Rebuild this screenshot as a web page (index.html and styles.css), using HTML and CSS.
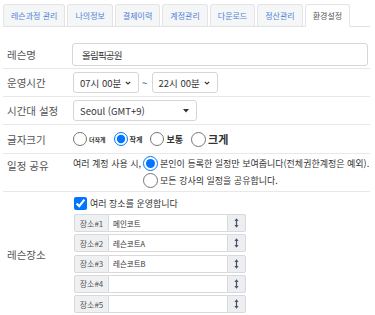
FILE: index.html
```html
<!DOCTYPE html>
<html lang="ko">
<head>
    <meta charset="UTF-8">
    <meta name="viewport" content="width=device-width, initial-scale=1.0">
    <title>환경설정</title>
    <link rel="stylesheet" href="styles.css">
</head>
<body>
    <div class="wrap">
        <ul class="tabs">
            <li>레슨과정 관리</li>
            <li>나의정보</li>
            <li>결제이력</li>
            <li>계정관리</li>
            <li>다운로드</li>
            <li>정산관리</li>
            <li class="active">환경설정</li>
        </ul>

        <div class="settings">
            <div class="row row-first">
                <div class="row-label">레슨명</div>
                <div class="row-body">
                    <input class="text-input" type="text" value="올림픽공원">
                </div>
            </div>

            <div class="row">
                <div class="row-label">운영시간</div>
                <div class="row-body time-range">
                    <div class="select time">
                        <span>07시 00분</span>
                        <svg width="6" height="4" viewBox="0 0 6 4"><polyline points="0.8,0.8 3,3 5.2,0.8" fill="none" stroke="#333" stroke-width="1.2"/></svg>
                    </div>
                    <span class="tilde">~</span>
                    <div class="select time">
                        <span>22시 00분</span>
                        <svg width="6" height="4" viewBox="0 0 6 4"><polyline points="0.8,0.8 3,3 5.2,0.8" fill="none" stroke="#333" stroke-width="1.2"/></svg>
                    </div>
                </div>
            </div>

            <div class="row">
                <div class="row-label">시간대 설정</div>
                <div class="row-body">
                    <div class="select zone">
                        <span>Seoul (GMT+9)</span>
                        <svg width="6" height="4" viewBox="0 0 6 4"><polygon points="0,0 6,0 3,3.5" fill="#333"/></svg>
                    </div>
                </div>
            </div>

            <div class="row">
                <div class="row-label">글자크기</div>
                <div class="row-body sizes">
                    <label><input type="radio" name="fs"><span class="fs-xs">더작게</span></label>
                    <label><input type="radio" name="fs" checked><span class="fs-s">작게</span></label>
                    <label><input type="radio" name="fs"><span class="fs-m">보통</span></label>
                    <label class="big"><input type="radio" name="fs"><span class="fs-l">크게</span></label>
                </div>
            </div>

            <div class="row">
                <div class="row-label row-label-top">일정 공유</div>
                <div class="row-body share">
                    <span class="share-intro">여러 계정 사용 시,</span>
                    <div class="share-options">
                        <label><input type="radio" name="share" checked>본인이 등록한 일정만 보여줍니다(전체권한계정은 예외).</label>
                        <label><input type="radio" name="share">모든 강사의 일정을 공유합니다.</label>
                    </div>
                </div>
            </div>

            <div class="row row-last">
                <div class="row-label">레슨장소</div>
                <div class="row-body">
                    <label class="multi"><input type="checkbox" checked>여러 장소를 운영합니다</label>
                    <div class="places">
                        <div class="place">
                            <span class="place-label">장소#1</span>
                            <input class="place-input" type="text" value="메인코트">
                            <span class="place-handle"><svg width="5" height="10" viewBox="0 0 5 10"><path d="M2.5 0.3 L4.6 3 H3.1 V7 H4.6 L2.5 9.7 L0.4 7 H1.9 V3 H0.4 Z" fill="#4d5563"/></svg></span>
                        </div>
                        <div class="place">
                            <span class="place-label">장소#2</span>
                            <input class="place-input" type="text" value="레슨코트A">
                            <span class="place-handle"><svg width="5" height="10" viewBox="0 0 5 10"><path d="M2.5 0.3 L4.6 3 H3.1 V7 H4.6 L2.5 9.7 L0.4 7 H1.9 V3 H0.4 Z" fill="#4d5563"/></svg></span>
                        </div>
                        <div class="place">
                            <span class="place-label">장소#3</span>
                            <input class="place-input" type="text" value="레슨코트B">
                            <span class="place-handle"><svg width="5" height="10" viewBox="0 0 5 10"><path d="M2.5 0.3 L4.6 3 H3.1 V7 H4.6 L2.5 9.7 L0.4 7 H1.9 V3 H0.4 Z" fill="#4d5563"/></svg></span>
                        </div>
                        <div class="place">
                            <span class="place-label">장소#4</span>
                            <input class="place-input" type="text" value="">
                            <span class="place-handle"><svg width="5" height="10" viewBox="0 0 5 10"><path d="M2.5 0.3 L4.6 3 H3.1 V7 H4.6 L2.5 9.7 L0.4 7 H1.9 V3 H0.4 Z" fill="#4d5563"/></svg></span>
                        </div>
                        <div class="place">
                            <span class="place-label">장소#5</span>
                            <input class="place-input" type="text" value="">
                            <span class="place-handle"><svg width="5" height="10" viewBox="0 0 5 10"><path d="M2.5 0.3 L4.6 3 H3.1 V7 H4.6 L2.5 9.7 L0.4 7 H1.9 V3 H0.4 Z" fill="#4d5563"/></svg></span>
                        </div>
                    </div>
                </div>
            </div>
        </div>
    </div>
</body>
</html>
```

FILE: styles.css
```css
html, body {
    margin: 0;
    padding: 0;
    background-color: #ffffff;
    color: #333333;
    font-family: "Noto Sans CJK KR", "Noto Sans", sans-serif;
}

.wrap {
    padding: 4px 5px 0 3px;
}

/* tabs */
.tabs {
    display: flex;
    gap: 2px;
    margin: 0;
    padding: 0;
    list-style: none;
    border-bottom: 1px solid #e2e2e2;
}

.tabs li {
    display: flex;
    align-items: center;
    height: 21px;
    padding: 0 7px;
    margin-bottom: -1px;
    background-color: #f5f6f7;
    border: 1px solid #e4e4e4;
    border-bottom-color: #e2e2e2;
    border-radius: 3px 3px 0 0;
    font-size: 8px;
    color: #4f82d6;
    white-space: nowrap;
}

.tabs li.active {
    background-color: #ffffff;
    color: #555555;
    border-bottom-color: #ffffff;
}

/* setting rows */
.settings {
    margin-top: 13px;
}

.row {
    display: flex;
    border-bottom: 1px solid #e8e8e8;
}

.row-last {
    border-bottom: none;
}

.row-label {
    display: flex;
    align-items: center;
    flex: none;
    width: 65px;
    padding-left: 4px;
    font-size: 10.5px;
    color: #555555;
    white-space: nowrap;
}

.row-label-top {
    align-items: flex-start;
    padding-top: 4px;
}

.row-body {
    flex: 1;
    min-width: 0;
    padding: 3px 2px 3px 0;
}

.row-first .row-body {
    padding-bottom: 2px;
}

.text-input {
    display: block;
    box-sizing: border-box;
    width: 100%;
    height: 23px;
    margin: 0;
    padding: 0 9px;
    border: 1px solid #d6d6d6;
    border-radius: 3px;
    font-family: inherit;
    font-size: 9.5px;
    letter-spacing: -0.8px;
    color: #333333;
}

/* selects */
.time-range {
    display: flex;
    align-items: center;
}

.select {
    display: flex;
    align-items: center;
    justify-content: space-between;
    box-sizing: border-box;
    height: 21px;
    margin-left: 1px;
    padding: 0 7px 0 6px;
    border: 1px solid #d6d6d6;
    border-radius: 3px;
    background-color: #ffffff;
    font-size: 9.5px;
    color: #333333;
}

.select.time {
    width: 66px;
}

.select.zone {
    width: 124px;
}

.tilde {
    margin: 0 3px 0 3px;
    font-size: 10px;
    color: #555555;
}

/* font size radios */
.sizes {
    display: flex;
    align-items: center;
    height: 22px;
    padding-left: 1px;
}

.sizes label {
    display: flex;
    align-items: center;
    gap: 2px;
    margin-right: 8px;
    font-weight: bold;
    color: #333333;
}

.sizes input {
    width: 14px;
    height: 14px;
    margin: 0;
}

.sizes .big input {
    width: 15px;
    height: 15px;
}

.fs-xs { font-size: 6px; }
.fs-s { font-size: 7px; }
.fs-m { font-size: 9px; }
.fs-l { font-size: 11px; }

/* schedule sharing */
.share {
    display: flex;
    align-items: flex-start;
    padding: 1px 0 2px 1px;
    font-size: 9px;
    color: #333333;
}

.share-intro {
    display: flex;
    align-items: center;
    height: 17px;
    margin-right: 2px;
}

.share-options label {
    display: flex;
    align-items: center;
    gap: 2px;
    height: 17px;
    white-space: nowrap;
}

.share-options input {
    width: 15px;
    height: 15px;
    margin: 0;
}

/* places */
.multi {
    display: flex;
    align-items: center;
    gap: 3px;
    height: 17px;
    margin-left: 2px;
    font-size: 9px;
    color: #333333;
}

.multi input {
    width: 13px;
    height: 13px;
    margin: 0;
}

.places {
    display: flex;
    flex-direction: column;
    gap: 2.25px;
    width: 172px;
    margin: 2px 0 0 2px;
}

.place {
    display: flex;
    height: 18px;
}

.place-label {
    display: flex;
    align-items: center;
    justify-content: center;
    flex: none;
    box-sizing: border-box;
    width: 35px;
    border: 1px solid #d9d9d9;
    border-radius: 2px 0 0 2px;
    background-color: #eef0f2;
    font-size: 8px;
    color: #555555;
}

.place-input {
    flex: 1;
    min-width: 0;
    box-sizing: border-box;
    height: 18px;
    margin: 0;
    padding: 0 4px;
    border: 1px solid #d9d9d9;
    border-left: none;
    border-right: none;
    border-radius: 0;
    font-family: inherit;
    font-size: 7.5px;
    color: #333333;
}

.place-handle {
    display: flex;
    align-items: center;
    justify-content: center;
    flex: none;
    box-sizing: border-box;
    width: 19px;
    border: 1px solid #d9d9d9;
    border-radius: 0 2px 2px 0;
    background-color: #eceef1;
}
```
